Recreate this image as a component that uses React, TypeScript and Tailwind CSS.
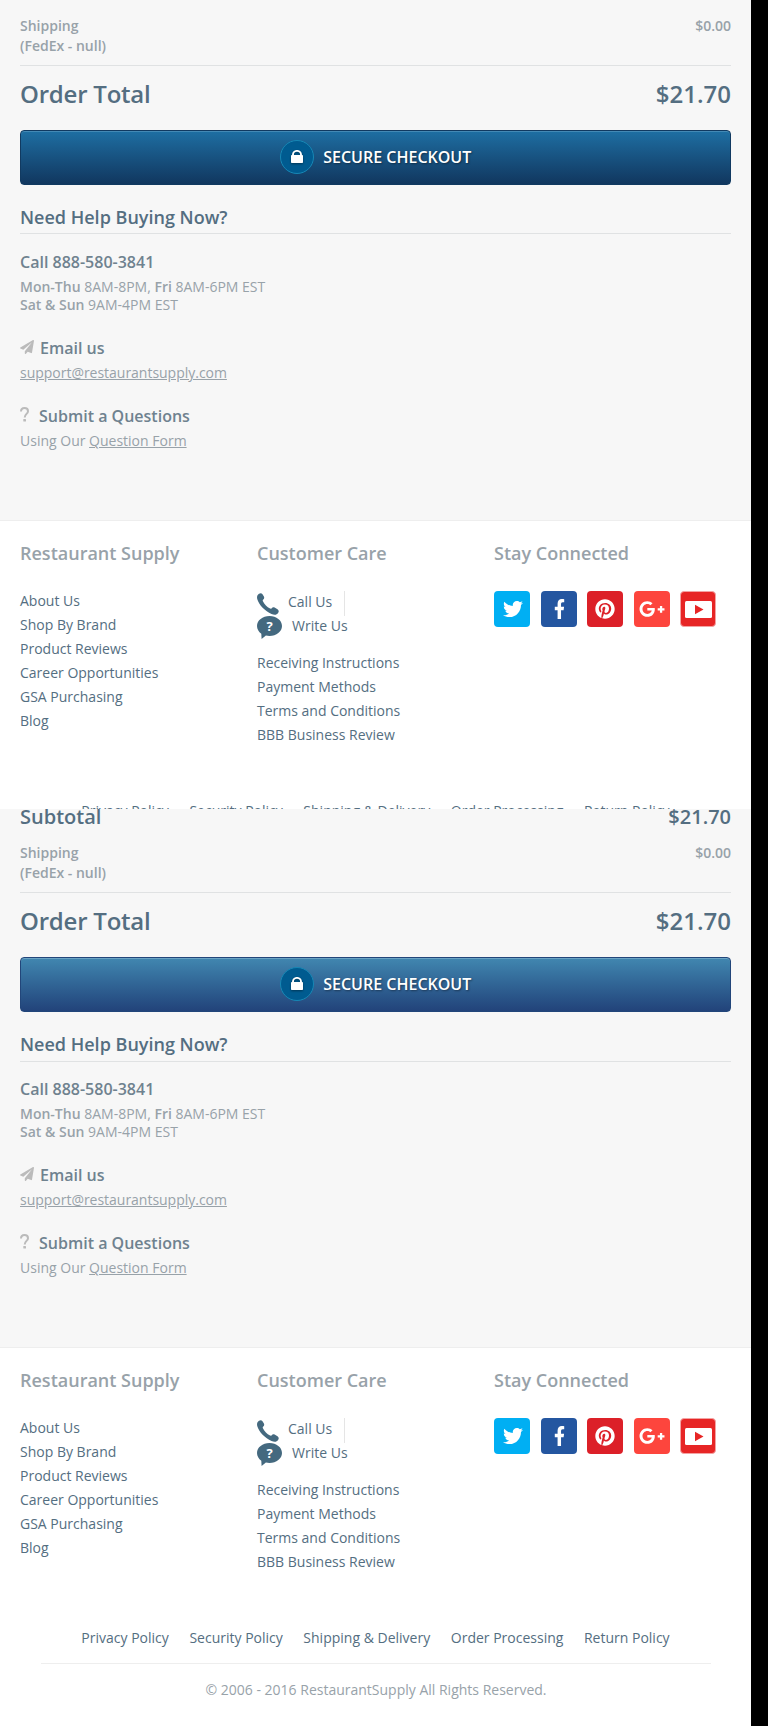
import React from "react";
import { FaFacebookF, FaGooglePlusG, FaPaperPlane, FaPinterest, FaTwitter } from "react-icons/fa";

const companyLinks = ["About Us", "Shop By Brand", "Product Reviews", "Career Opportunities", "GSA Purchasing", "Blog"];
const careLinks = ["Receiving Instructions", "Payment Methods", "Terms and Conditions", "BBB Business Review"];
const policyLinks = ["Privacy Policy", "Security Policy", "Shipping & Delivery", "Order Processing", "Return Policy"];

function LockBadge() {
  return (
    <span className="flex h-[34px] w-[34px] items-center justify-center rounded-full border border-[#1787b5] bg-[#005b90]">
      <svg width="12" height="13" viewBox="0 0 12 13" className="drop-shadow-[0_1px_1px_rgba(0,0,0,0.4)]">
        <path d="M2 6V4.6a4 3.7 0 0 1 8 0V6" fill="none" stroke="#fff" strokeWidth="1.9" />
        <rect x="0" y="5" width="12" height="8" rx="0.8" fill="#fff" />
      </svg>
    </span>
  );
}

function CheckoutButton({ hovered }: { hovered: boolean }) {
  const tone = hovered
    ? "border-[#22467a] from-[#4187b0] to-[#22437a] shadow-[inset_0_1px_0_#6ba3c4]"
    : "border-[#113a61] from-[#1e6fa3] to-[#11375f] shadow-[inset_0_1px_0_#4389b5]";
  return (
    <button
      className={`mt-5 flex h-[55px] w-full items-center justify-center gap-[9.5px] rounded-[4px] border bg-linear-to-b pb-[2px] text-[16px] leading-[22px] font-semibold text-white ${tone}`}
    >
      <LockBadge />
      <span className="[text-shadow:1px_1px_2px_rgba(0,0,0,0.4)]">SECURE CHECKOUT</span>
    </button>
  );
}

function Summary({ hovered }: { hovered: boolean }) {
  return (
    <section className={`flex shrink-0 flex-col bg-[#f7f7f7] px-5 text-[14px] text-[#98a2a9] ${hovered ? "h-[538px]" : "h-[520px] pt-4"}`}>
      {hovered && (
        <div className="-mt-1.5 mb-[13px] flex justify-between text-[20px] leading-[27px] font-semibold text-[#546e81]">
          <span>Subtotal</span>
          <span>$21.70</span>
        </div>
      )}
      <div className="flex justify-between border-b border-[#e0e2e3] pb-[9px] leading-[20px] font-semibold">
        <span>
          Shipping
          <br />
          (FedEx - null)
        </span>
        <span>$0.00</span>
      </div>
      <div className="mt-[11px] flex justify-between text-[24px] leading-[33px] font-semibold text-[#546e81]">
        <span className="tracking-[-0.22px]">Order Total</span>
        <span>$21.70</span>
      </div>
      <CheckoutButton hovered={hovered} />
      <h2 className={`mt-5 border-b border-[#e0e2e3] text-[18px] leading-[24px] font-semibold text-[#546e81] ${hovered ? "mb-4 pb-[5px]" : "mb-[17px] pb-1"}`}>
        Need Help Buying Now?
      </h2>
      <h3 className="text-[16px] leading-[22px] font-semibold text-[#6f828f]">Call 888-580-3841</h3>
      <p className="mt-[5px] leading-[18px]">
        <b className="font-semibold">Mon-Thu</b> 8AM-8PM, <b className="font-semibold">Fri</b> 8AM-6PM EST
        <br />
        <b className="font-semibold">Sat &amp; Sun</b> 9AM-4PM EST
      </p>
      <h3 className="mt-[23px] flex gap-[6px] text-[16px] leading-[22px] font-semibold text-[#6f828f]">
        <FaPaperPlane className="mt-[3px] h-[14px] w-[14px] text-[#bbbbbb]" />
        Email us
      </h3>
      <p className="mt-1 leading-[19px] tracking-[-0.02px]">
        <a className="underline">support@restaurantsupply.com</a>
      </p>
      <h3 className="mt-[23px] flex gap-[10px] text-[16px] leading-[22px] font-semibold text-[#6f828f]">
        <svg width="9" height="15" viewBox="0 0 9 15" className="mt-[2px]">
          <path d="M1 4.600C1 2.200 2.500 1.100 4.500 1.100S8 2.200 8 4.200C8 6.900 4.700 7 4.700 10.500" fill="none" stroke="#bbb" strokeWidth="2" />
          <rect x="3.300" y="12" width="2.700" height="2.600" rx="0.600" fill="#bbb" />
        </svg>
        Submit a Questions
      </h3>
      <p className="mt-1 leading-[19px]">
        Using Our <a className="underline">Question Form</a>
      </p>
    </section>
  );
}

function SocialTile({ tone, children }: { tone: string; children: React.ReactNode }) {
  return <a className={`flex h-9 w-9 items-center justify-center rounded-[4px] text-white ${tone}`}>{children}</a>;
}

function Footer() {
  return (
    <footer className="h-[379px] shrink-0 border-t border-[#eeeeee] bg-white pt-5 text-[14px] leading-[24px] text-[#546e81]">
      <div className="grid h-[258px] grid-cols-[237px_237px_237px] px-5">
        <div>
          <h4 className="text-[18px] font-semibold text-[#98a2a9]">Restaurant Supply</h4>
          <ul className="mt-6">
            {companyLinks.map((label) => (
              <li key={label}>{label}</li>
            ))}
          </ul>
        </div>
        <div>
          <h4 className="text-[18px] font-semibold text-[#98a2a9]">Customer Care</h4>
          <div className="mt-[25px] flex h-6">
            <svg width="22" height="22" viewBox="0 0 22 22" className="mt-[3px]" fill="#44697f">
              <path d="M2 .7C3.400-.3 4.800.1 5.500 1.300l1.400 2.300c.6 1.200.3 2.300-.6 3-.7.500-.7 1-.4 1.600 1.600 3.100 4 5.500 7.200 7.400.6.300 1.100.200 1.600-.400.700-1 1.800-1.200 2.900-.600l2.900 1.700c1.400.900 1.600 2.300.600 3.600-1.300 2-3.800 2.200-6.600 1C8.200 18.300 1.900 11.700.3 6.200-.4 3.700.3 1.900 2 .7z" />
            </svg>
            <span className="mt-px ml-[9px] h-[25px] border-r border-[#e5e5e5] pr-3">
              <span className="-mt-px block">Call Us</span>
            </span>
          </div>
          <div className="flex h-6">
            <svg width="25" height="23" viewBox="0 0 25 23" className="mt-[2px]">
              <path d="M12.500 0C19.400 0 25 4.400 25 10s-5.600 10-12.500 10c-1.300 0-2.500-.2-3.600-.5L4.600 23l-.3-5.300C1.700 15.900 0 13.100 0 10 0 4.400 5.600 0 12.500 0z" fill="#44697f" />
              <text x="12.500" y="15" textAnchor="middle" fill="#fff" className="text-[13px] font-bold">
                ?
              </text>
            </svg>
            <span className="ml-[10px]">Write Us</span>
          </div>
          <ul className="mt-[13px]">
            {careLinks.map((label) => (
              <li key={label}>{label}</li>
            ))}
          </ul>
        </div>
        <div>
          <h4 className="text-[18px] font-semibold text-[#98a2a9]">Stay Connected</h4>
          <div className="mt-[26px] flex">
            <SocialTile tone="bg-[#00aff3]">
              <FaTwitter size={20} className="translate-x-px" />
            </SocialTile>
            <SocialTile tone="ml-[11px] bg-[#2456a0]">
              <FaFacebookF preserveAspectRatio="none" className="h-[20px] w-[11px]" />
            </SocialTile>
            <SocialTile tone="ml-[10px] bg-[#dc2028]">
              <FaPinterest size={20} />
            </SocialTile>
            <SocialTile tone="ml-[11px] bg-[#fd453d]">
              <FaGooglePlusG size={26} />
            </SocialTile>
            <SocialTile tone="ml-[10px] border border-[#f3a3a3] bg-[#e72525]">
              <svg width="27" height="17" viewBox="0 0 27 17" className="shrink-0">
                <rect width="27" height="17" rx="1.500" fill="#fff" />
                <path d="M10 3.800v9.400l8.500-4.700z" fill="#e72525" />
              </svg>
            </SocialTile>
          </div>
        </div>
      </div>
      <nav className="flex justify-center gap-[20.6px]">
        {policyLinks.map((label) => (
          <a key={label}>{label}</a>
        ))}
      </nav>
      <p className="mr-10 ml-[41px] mt-[13px] border-t border-[#eeeeee] pt-[14px] text-center text-[#98a2a9]">
        © 2006 - 2016 RestaurantSupply All Rights Reserved.
      </p>
    </footer>
  );
}

export default function App() {
  return (
    <main className="h-[1726px] w-[768px] overflow-hidden bg-black font-['Open_Sans',sans-serif]">
      <div className="flex h-[809px] w-[751px] flex-col overflow-hidden">
        <Summary hovered={false} />
        <Footer />
      </div>
      <div className="flex h-[917px] w-[751px] flex-col overflow-hidden">
        <Summary hovered />
        <Footer />
      </div>
    </main>
  );
}
